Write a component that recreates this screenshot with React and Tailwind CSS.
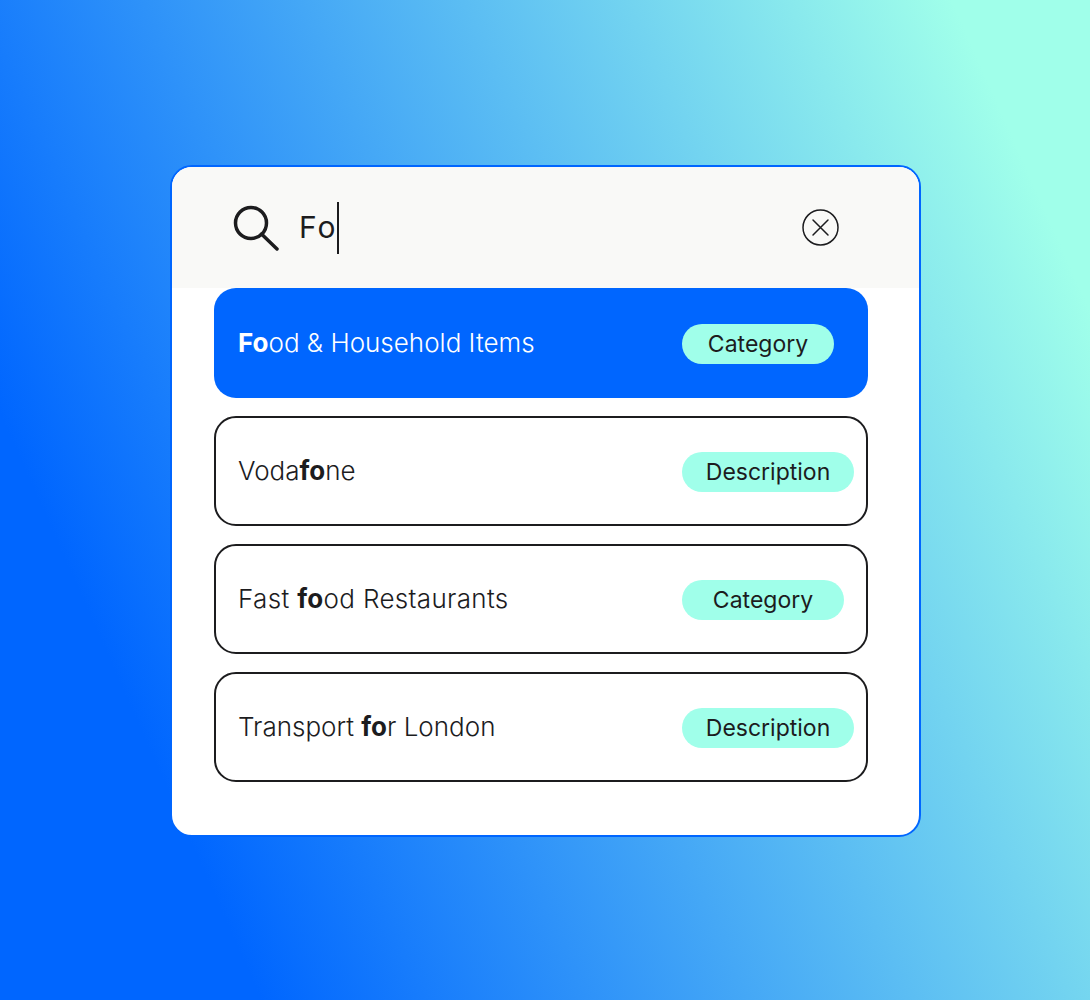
import React from 'react';

const results = [
  { before: '', match: 'Fo', after: 'od & Household Items', tag: 'Category', tagWidth: 'w-[152px]', active: true },
  { before: 'Voda', match: 'fo', after: 'ne', tag: 'Description', tagWidth: 'w-[172px]' },
  { before: 'Fast ', match: 'fo', after: 'od Restaurants', tag: 'Category', tagWidth: 'w-[162px]', wide: true },
  { before: 'Transport ', match: 'fo', after: 'r London', tag: 'Description', tagWidth: 'w-[172px]' },
];

const SearchIcon = () => (
  <svg width="46" height="46" viewBox="0 0 46 46" fill="none" stroke="#1c1c1e" strokeWidth="3.5" strokeLinecap="round">
    <circle cx="18" cy="18" r="15.5" />
    <path d="M28.5 29 L44 44" />
  </svg>
);

const ClearIcon = () => (
  <svg width="37" height="37" viewBox="0 0 37 37" fill="none" stroke="#1c1c1e" strokeWidth="1.5" strokeLinecap="round">
    <circle cx="18.5" cy="18.5" r="17.5" />
    <path d="M11 11 L26 26 M26 11 L11 26" />
  </svg>
);

const ResultRow = ({ item }) => (
  <div
    className={`flex items-center h-[110px] rounded-[22px] pt-[2px] ${
      item.active ? 'bg-[#0066ff] pl-[24px] text-white' : 'border-2 border-[#1c1c1e] pl-[22px] text-[#1c1c1e]'
    }`}
  >
    <p className={`mb-1 w-[444px] shrink-0 text-[26px] font-light ${item.wide ? 'tracking-[0.33px]' : ''}`}>
      {item.before}
      <span className="font-bold">{item.match}</span>
      {item.after}
    </p>
    <span className={`${item.tagWidth} h-10 shrink-0 rounded-full bg-[#a0ffea] text-center text-[23px] font-normal leading-10 text-[#1c1c1e]`}>
      {item.tag}
    </span>
  </div>
);

export default function App() {
  return (
    <div className="flex h-[1000px] items-center justify-center bg-[linear-gradient(66deg,#0066ff_17%,#a0ffea_91%)] pl-px pt-[2px] font-['Inter',sans-serif]">
      <div className="h-[672px] w-[751px] overflow-hidden rounded-[22px] border-2 border-[#0066ff] bg-white">
        <div className="flex h-[121px] items-center bg-[#f9f9f7] pl-[61px] pr-[80px]">
          <SearchIcon />
          <span className="ml-5 text-[30px] tracking-[2px] text-[#1c1c1e]">Fo</span>
          <span className="-ml-px h-[52px] w-[2px] bg-[#1c1c1e]"></span>
          <button className="ml-auto flex">
            <ClearIcon />
          </button>
        </div>
        <div className="flex w-[654px] flex-col gap-[18px] ml-[42px]">
          {results.map((item) => (
            <ResultRow key={item.tag + item.match + item.after} item={item} />
          ))}
        </div>
      </div>
    </div>
  );
}
